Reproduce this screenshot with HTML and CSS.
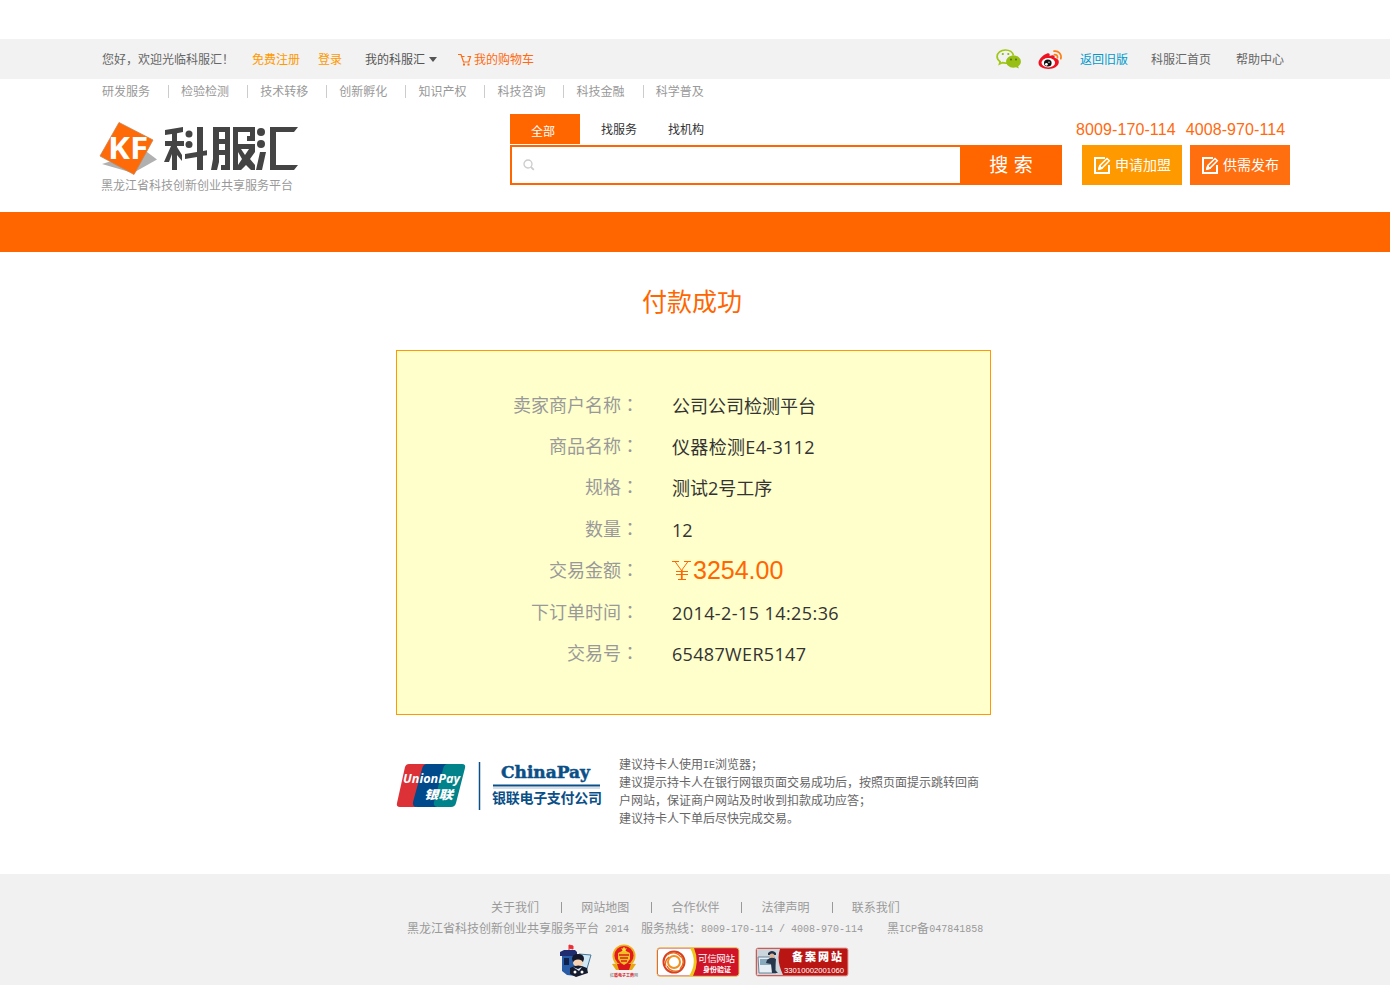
FILE: index.html
```html
<!DOCTYPE html>
<html lang="zh-CN">
<head>
<meta charset="utf-8">
<title>付款成功 - 科服汇</title>
<link rel="stylesheet" href="styles.css">
</head>
<body>
<div class="topbar">
  <div class="wrap topbar-in">
    <span class="hello">您好，欢迎光临科服汇！</span>
    <a class="reg">免费注册</a>
    <a class="login">登录</a>
    <a class="mine">我的科服汇<i class="caret"></i></a>
    <a class="cart"><svg width="14" height="14" viewBox="0 0 14 14" fill="none" stroke="#ff6a10" stroke-width="1.200"><path d="M0 1.500h3L5.500 9h5.300L12.500 3.500H9.500M3.500 3.500h3"/><path d="M5 11.500h2M9.500 11.500h2" stroke-width="2"/></svg>我的购物车</a>
    <svg class="wechat" width="26" height="20" viewBox="0 0 26 20"><path d="M9.500 1C4.800 1 1.100 4 1.100 7.600c0 2.200 1.200 3.900 3 5.100L3.500 15l3-1.400c1.600.5 3.600.5 5.200.2M17.500 6.500C16.800 3.300 13.500 1 9.500 1" fill="none" stroke="#a0c814" stroke-width="1.700"/><path d="M17.500 6.500c4.200 0 7.400 2.700 7.400 6 0 2-1 3.600-2.700 4.700l.6 2.300-2.700-1.200c-5.500 1.400-10-1.700-10-5.800 0-3.300 3.300-6 7.400-6z" fill="#98c014"/><g fill="#8bb511"><circle cx="6.800" cy="5" r="1.100"/><circle cx="12.300" cy="5" r="1.100"/></g><g fill="#49660c"><circle cx="15" cy="10.500" r=".9"/><circle cx="20" cy="10.500" r=".9"/></g></svg>
    <svg class="weibo" width="25" height="20" viewBox="0 0 25 20"><path d="M9 3.500c2-.8 3.200.3 2.600 2.600 3-1.400 5.700-.9 5 1.700 2.800.7 4.600 2.300 4.200 4.800C20.200 16.500 15.800 19 10.500 19S.5 16.800.5 12.800C.5 9.500 4.800 5 9 3.500z" fill="#ee1220"/><ellipse cx="10.300" cy="12.700" rx="6.800" ry="4.700" fill="#fff"/><ellipse cx="9.800" cy="13" rx="3.800" ry="3.500" fill="#111"/><circle cx="8.400" cy="14.300" r="1.400" fill="#fff"/><circle cx="11" cy="12.200" r=".7" fill="#fff"/><g fill="none" stroke="#ff7d12" stroke-width="1.700" stroke-linecap="round"><path d="M16 1.200c4.500-.8 8 3 6.800 7.500"/><path d="M16.500 4.600c2-.2 3.400 1.300 3 3.200"/></g></svg>
    <a class="old">返回旧版</a>
    <a class="home">科服汇首页</a>
    <a class="help">帮助中心</a>
  </div>
</div>
<div class="wrap cats"><a>研发服务</a><a>检验检测</a><a>技术转移</a><a>创新孵化</a><a>知识产权</a><a>科技咨询</a><a>科技金融</a><a>科学普及</a></div>
<div class="wrap header">
  <div class="brand">
    <svg width="200" height="56" viewBox="0 0 200 56">
      <path d="M2 43l31 9 24-13.500-12-9z" fill="#b0b0b0"/>
      <path d="M19 1.500L53 19 34 53.500 0 35z" fill="#ff6a08" stroke="#c98350" stroke-width=".8"/>
      <text class="kf" x="8" y="38" textLength="40" lengthAdjust="spacingAndGlyphs">KF</text>
      <g fill="#444">
        <path d="M65 9L83 6v5l-6 1.200V20h7v5h-7v24h-5V33l-3 8h-5l7-16h-6v-5h7v-7l-7 1zM77 26l5 8v6l-5-6z"/>
        <circle cx="89" cy="13" r="3.500"/><circle cx="89" cy="23.500" r="3.500"/>
        <path d="M97 6h6v24l4-.8v5l-4 .6V49h-6V36l-12 2v-5l12-2z"/>
        <path fill-rule="evenodd" d="M113 6h17v43h-9v-5h4V34h-6v7l-2 8h-6l2-11zm6 5v7h6v-7zm0 12v6h6v-6z"/>
        <path fill-rule="evenodd" d="M133 6h22v14h-8v-5h3v-4h-12v12h17v8l-5 7 5 6v5h-4l-5-5-5 5h-3v-5l4-6-4-7v18h-5zm8 22l4 6 4-6z"/>
        <circle cx="161" cy="11" r="4"/><circle cx="161" cy="23" r="4"/>
        <path d="M160 31h6l-4 18h-6zM170 6h28l-4 5h-18v33h22l-4 5h-24z"/>
      </g>
    </svg>
    <div class="slogan">黑龙江省科技创新创业共享服务平台</div>
  </div>
  <div class="search">
    <div class="tabs"><a class="on">全部</a><a class="t2">找服务</a><a class="t3">找机构</a></div>
    <div class="searchrow">
      <div class="field"><svg width="12" height="12" viewBox="0 0 12 12" fill="none" stroke="#ccc" stroke-width="1.300"><circle cx="5" cy="5" r="4"/><path d="M7.800 7.800l3 3" stroke-width="1.800"/></svg></div>
      <div class="go">搜 索</div>
    </div>
  </div>
  <div class="side">
    <div class="phones"><span>8009-170-114</span><span>4008-970-114</span></div>
    <div class="btns">
      <a class="btn amber"><svg width="17" height="17" viewBox="0 0 17 17" fill="none" stroke="#fff"><path d="M11 1H1v15h14V8" stroke-width="2"/><path d="M5 12l1-3.500 7-7 2.300 2.300-7 7z" stroke-width="1.500"/><path d="M4.500 12.500l1-4 3 3z" fill="#fff"/></svg>申请加盟</a>
      <a class="btn orange"><svg width="17" height="17" viewBox="0 0 17 17" fill="none" stroke="#fff"><path d="M11 1H1v15h14V8" stroke-width="2"/><path d="M5 12l1-3.500 7-7 2.300 2.300-7 7z" stroke-width="1.500"/><path d="M4.500 12.500l1-4 3 3z" fill="#fff"/></svg>供需发布</a>
    </div>
  </div>
</div>
<div class="band"></div>
<h1 class="title">付款成功</h1>
<dl class="detail">
  <dt>卖家商户名称<i lang="zh-TW">：</i></dt><dd>公司公司检测平台</dd>
  <dt>商品名称<i lang="zh-TW">：</i></dt><dd class="code">仪器检测E4-3112</dd>
  <dt>规格<i lang="zh-TW">：</i></dt><dd>测试2号工序</dd>
  <dt>数量<i lang="zh-TW">：</i></dt><dd>12</dd>
  <dt>交易金额<i lang="zh-TW">：</i></dt><dd class="price"><svg width="20" height="19" viewBox="0 0 20 19" fill="none" stroke="#ff6600"><path d="M0 .5h7M12 .5h7M3 .5l6.500 9L16 .5M4 10.500h12M4 13.500h12M6 18.500h8"/><path d="M9.800 9v9.500" stroke-width="1.800"/></svg>3254.00</dd>
  <dt>下订单时间<i lang="zh-TW">：</i></dt><dd class="date">2014-2-15 14:25:36</dd>
  <dt>交易号<i lang="zh-TW">：</i></dt><dd class="code">65487WER5147</dd>
</dl>
<div class="notice">
  <svg width="210" height="52" viewBox="0 0 210 52">
    <path d="M13 3h19L20 46H4q-4 0-3-4L9 6q1-3 4-3z" fill="#dc3237"/>
    <path d="M31 3h23L41 46H21q-5 0-4-5l9-33q1-5 5-5z" fill="#004a8c"/>
    <path d="M52 3h14q4 0 3 4l-9 35q-1 4-5 4H42q-5 0-4-5l9-33q1-5 5-5z" fill="#00838a"/>
    <text class="up" x="7" y="22" textLength="57" lengthAdjust="spacingAndGlyphs">UnionPay</text>
    <text class="upcn" x="28" y="38" textLength="29" lengthAdjust="spacingAndGlyphs">银联</text>
    <path d="M83.500 1v48" stroke="#0b4f87" stroke-width="1.500"/>
    <text class="cp" x="105" y="17" textLength="89" lengthAdjust="spacingAndGlyphs">ChinaPay</text>
    <path d="M97 24.500h107" stroke="#0b4f87" stroke-width="2"/><path d="M97 27h107" stroke="#a9bfd3"/>
    <text class="cpcn" x="96" y="42" textLength="110">银联电子支付公司</text>
  </svg>
  <p>建议持卡人使用<span class="m">IE</span>浏览器；<br>建议提示持卡人在银行网银页面交易成功后，按照页面提示跳转回商<br>户网站，保证商户网站及时收到扣款成功应答；<br>建议持卡人下单后尽快完成交易。</p>
</div>
<div class="footer">
  <div class="links"><a>关于我们</a><a>网站地图</a><a>合作伙伴</a><a>法律声明</a><a>联系我们</a></div>
  <div class="copy"><span>黑龙江省科技创新创业共享服务平台<span class="m"> 2014</span></span><span class="hot">服务热线：<span class="m">8009-170-114 / 4008-970-114</span></span><span class="icp">黑<span class="m">ICP</span>备<span class="m">047841858</span></span></div>
  <div class="badges">
    <svg class="b1" width="33" height="34" viewBox="0 0 33 34">
      <path d="M10 6V1M10 1l4 1v3l-4-1" fill="#ef2d35" stroke="#ef2d35"/><path d="M1 8l4-2h11l2 2v4H1z" fill="#202c70"/><path d="M3 12h14v20l-9-1-5-4z" fill="#285ca6"/><path d="M5 14h5v7H5z" fill="#10224b"/>
      <path d="M20 10l12 1-5 17h-9z" fill="#d1e7f4" stroke="#46789c"/><path d="M13 15q0-5 6-5t6 5l-1 3H14z" fill="#15172b"/><ellipse cx="19" cy="19" rx="5" ry="3.500" fill="#f7d2b3"/><path d="M11 24q8-5 17 0l1 5-12 4-6-3z" fill="#161a2d"/><path d="M14 23l5 2 4-2-3 4z" fill="#dceaf5"/><circle cx="16" cy="28" r="1.500" fill="#fff"/><circle cx="23" cy="28" r="1.500" fill="#fff"/>
    </svg>
    <svg class="b2" width="30" height="34" viewBox="0 0 30 34">
      <path d="M3 20q3-1 6 1l6 3 6-3q3-2 6-1l-4 6H7z" fill="#e6a713"/><circle cx="15" cy="12" r="11.500" fill="#edb21a"/><circle cx="15" cy="11.500" r="9.600" fill="#e31b20"/><path d="M8 20h14l-2 6H10z" fill="#d8151b"/><path d="M15 6l6 3v6q-2 4-6 6-4-2-6-6V9z" fill="#f3bd25"/><path d="M15 2.500l1 2h2l-1.500 1.500.5 2-2-1-2 1 .5-2L12 4.500h2z" fill="#ffdb35"/><path d="M10 11h10M11 14h8M12 17h6" stroke="#d9231a" stroke-width="1.300"/>
      <text class="gs" x="1" y="33" textLength="28"><tspan fill="#999">红</tspan>盾电子工商<tspan fill="#999">网</tspan></text>
    </svg>
    <svg class="b3" width="84" height="30" viewBox="0 0 84 30">
      <rect x="1" y=".7" width="82" height="28.600" rx="3" fill="#d01327" stroke="#e9c75c"/><path d="M4 1.500h32q8 13 0 27H4q-2 0-2-2V3.500q0-2 2-2z" fill="#fff"/><path d="M34 1h4q6 14-1 28h-4q9-14 1-28z" fill="#efc51e"/>
      <g fill="none" stroke-width="2"><circle cx="18" cy="15" r="10.500" stroke="#d8401f"/><circle cx="18" cy="15" r="6" stroke="#f0901e"/></g><path d="M11 8q8-5 14 2M25 9q5 6-1 13M22 24q-8 1-11-5M10 19q-2-5 3-9" fill="none" stroke="#e66b20" stroke-width="1.300"/>
      <text class="w1" x="42" y="15" textLength="37">可信网站</text><text class="w2" x="47" y="25" textLength="28">身份验证</text>
    </svg>
    <svg class="b4" width="94" height="30" viewBox="0 0 94 30">
      <rect x="1" y="1" width="92" height="28" rx="2" fill="#b81513" stroke="#e4a098"/><path d="M2 2h23q-4 11 3 26H2z" fill="#cbd5dc"/><path d="M3 10h16l2 16H4z" fill="#e7eff4" stroke="#6c8596"/><path d="M5 12h12v6H5z" fill="#89a9bc"/><path d="M13 6q4-4 8 0v2h-8z" fill="#243044"/><circle cx="17" cy="9" r="2.500" fill="#d8b49b"/><path d="M12 13q4-4 9-1l-1 11 3 3h-6l-1-9-5-1z" fill="#26364b"/>
      <text class="ba" x="37" y="14" textLength="50">备案网站</text><text class="num" x="29" y="25.500" textLength="60" lengthAdjust="spacingAndGlyphs">33010002001060</text>
    </svg>
  </div>
</div>
</body>
</html>
```
FILE: styles.css
```css
* { box-sizing: border-box; }
body { margin: 0; padding-top: 39px; background: #fff; color: #666; font: 12px/18px "Liberation Sans", "Noto Sans CJK SC", sans-serif; height: 985px; overflow: hidden; }
svg { display: block; flex: none; overflow: visible; }
a, span { white-space: nowrap; }
.m { font-family: "Liberation Mono", monospace; font-size: 10px; line-height: 1; white-space: pre; vertical-align: 1px; }
.wrap { width: 1190px; margin: 0 auto; display: flex; }
.topbar { height: 40px; background: #f2f2f2; }
.topbar-in { height: 40px; align-items: center; padding: 2px 0 0 2px; }
.hello { width: 150px; }
.reg { width: 66px; color: #f90; }
.login { width: 47px; color: #f90; }
.mine { width: 93px; display: flex; align-items: center; color: #555; }
.caret { border: 4px solid transparent; border-top: 5px solid #555; border-bottom: 0; margin: -2px 0 0 4px; }
.cart { width: 538px; display: flex; align-items: center; gap: 2px; color: #ff6a10; }
.wechat { margin: -2px 16px 0 0; }
.weibo { margin-right: 17px; }
.old { width: 71px; color: #09c; }
.home { width: 85px; }
.cats { height: 35px; padding: 4px 0 0 2px; color: #999; }
.cats a { width: 79.100px; height: 18px; position: relative; }
.cats a:not(:last-child)::after { content: ""; position: absolute; left: 66px; top: 2px; width: 1px; height: 13px; background: #ccc; }
.header { height: 98px; }
.brand { width: 410px; padding-top: 7px; }
.slogan { color: #999; padding-left: 1px; }
.search { width: 572px; }
.tabs { display: flex; height: 31px; line-height: 33px; color: #333; }
.on { width: 70px; height: 30px; background: #f60; color: #fff; padding-left: 21px; line-height: 36px; margin-right: 21px; }
.t2 { width: 67px; }
.searchrow { display: flex; height: 40px; }
.field { width: 450px; border: 2px solid #f60; border-right: 0; padding: 12px 0 0 11px; }
.go { width: 102px; background: #f60; color: #fff; font-size: 19px; line-height: 41px; text-align: center; }
.phones { display: flex; gap: 10px; margin-left: -6px; height: 31px; line-height: 31px; font-size: 16px; color: #ff6a10; letter-spacing: .1px; }
.btns { display: flex; gap: 8px; }
.btn { width: 100px; height: 40px; display: flex; align-items: center; gap: 4px; padding-left: 12px; color: #fff; font-size: 14px; }
.amber { background: #f90; }
.orange { background: #ff6f10; }
.band { height: 40px; background: #f60; }
.title { margin: 0; height: 98px; padding: 31px 0 0 642px; font-size: 25px; line-height: 38px; font-weight: 400; color: #f60; }
.detail { margin: 0 0 0 396px; width: 595px; height: 365px; border: 1px solid #f90; background: #ffc; padding-top: 34.500px; display: grid; grid-template-columns: 242px 1fr; grid-auto-rows: 41.430px; column-gap: 33px; line-height: 41px; font-size: 18px; }
.detail dt { text-align: right; color: #999; }
.detail dt i { font-family: "Noto Sans CJK TC", sans-serif; font-style: normal; line-height: 1; }
.detail dd { margin: 0; color: #333; font-family: "Open Sans", "Noto Sans CJK SC", sans-serif; }
.detail .code { letter-spacing: .33px; }
.detail .date { letter-spacing: .42px; }
.detail .price { display: flex; align-items: center; gap: 1px; color: #f60; font: 25px/41px "Liberation Sans", sans-serif; height: 39px; }
.notice { margin-left: 396px; padding-top: 40px; height: 159px; display: flex; }
.notice svg { margin: 6px 13px 0 0; }
.notice p { margin: 1px 0 0; white-space: nowrap; }
.up { font: italic 700 12px "Open Sans", sans-serif; fill: #fff; }
.upcn { font: italic 900 12px "Noto Sans CJK SC", sans-serif; fill: #fff; }
.cp { font: 700 17px "DejaVu Serif", serif; fill: #0b4f87; stroke: #0b4f87; stroke-width: .5px; }
.cpcn { font: 700 14px "Noto Sans CJK SC", sans-serif; fill: #0b4f87; }
.kf { font: 700 30px "Open Sans", sans-serif; fill: #fff; }
.footer { height: 111px; background: #f1f1f1; color: #999; padding-top: 25px; }
.links { display: flex; margin-left: 491px; }
.links a { width: 90.200px; position: relative; }
.links a:not(:last-child)::after { content: ""; position: absolute; left: 70px; top: 3px; width: 1px; height: 11px; background: #999; }
.copy { display: flex; margin: 3px 0 0 407px; }
.hot { margin-left: 12px; }
.icp { margin-left: 24px; }
.badges { display: flex; margin: 6px 0 0 559px; }
.b2 { margin-left: 17px; }
.b3 { margin: 3px 0 0 17px; }
.b4 { margin: 3px 0 0 15px; }
.gs { font: 700 4px "Noto Sans CJK SC", sans-serif; fill: #d8151b; }
.w1 { font: 9.500px "Noto Sans CJK SC", sans-serif; fill: #fff; }
.w2 { font: 700 7px "Noto Sans CJK SC", sans-serif; fill: #fff; }
.ba { font: 900 11px "Noto Sans CJK SC", sans-serif; fill: #fff; }
.num { font: 8px "Liberation Sans", sans-serif; fill: #fff; }
```
